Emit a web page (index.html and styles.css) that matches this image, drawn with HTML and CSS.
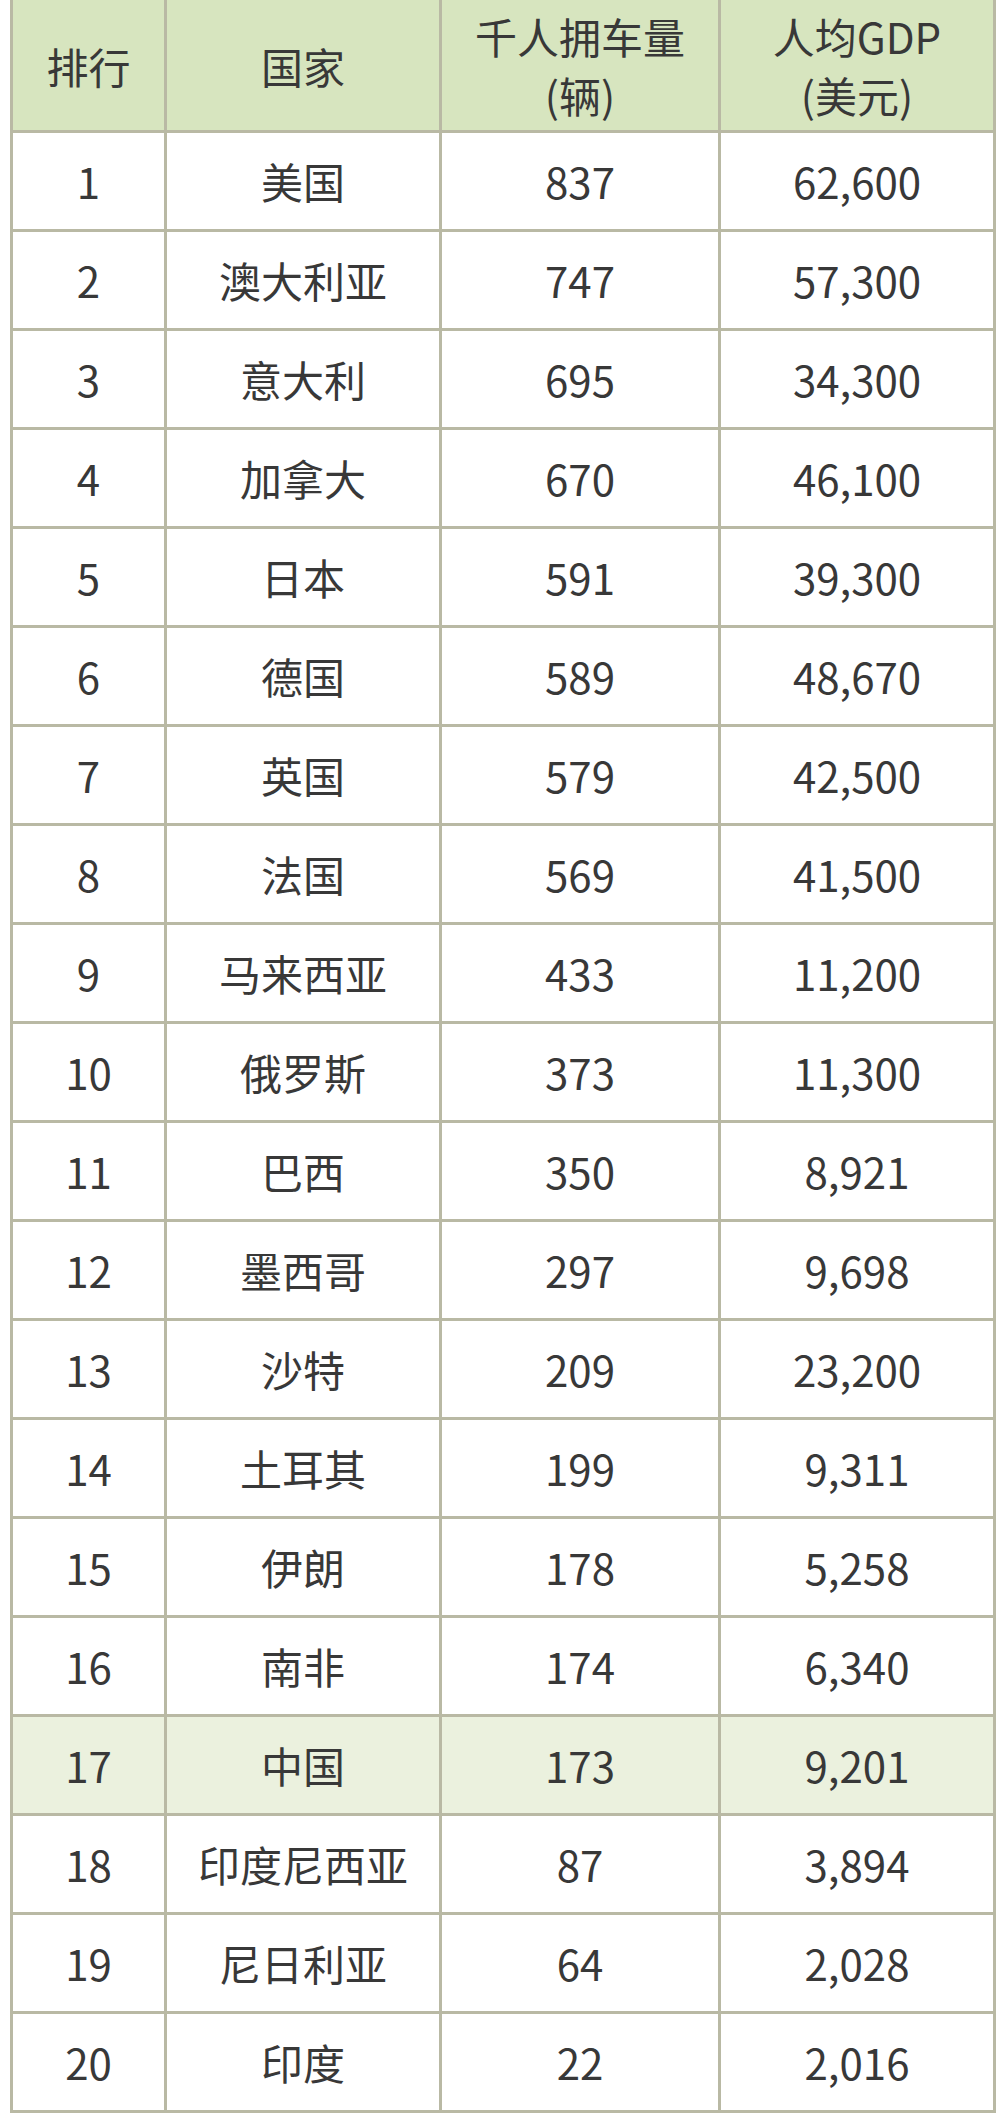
FILE: index.html
```html
<!DOCTYPE html>
<html lang="zh-CN">
<head>
<meta charset="utf-8">
<title>千人拥车量排行</title>
<link rel="stylesheet" href="styles.css">
</head>
<body>
<table class="rank-table">
  <colgroup>
    <col class="c-rank">
    <col class="c-country">
    <col class="c-cars">
    <col class="c-gdp">
  </colgroup>
  <thead>
    <tr class="head-row">
      <th>排行</th>
      <th>国家</th>
      <th>千人拥车量<br>(辆)</th>
      <th>人均GDP<br>(美元)</th>
    </tr>
  </thead>
  <tbody>
    <tr><td>1</td><td>美国</td><td>837</td><td>62,600</td></tr>
    <tr><td>2</td><td>澳大利亚</td><td>747</td><td>57,300</td></tr>
    <tr><td>3</td><td>意大利</td><td>695</td><td>34,300</td></tr>
    <tr><td>4</td><td>加拿大</td><td>670</td><td>46,100</td></tr>
    <tr><td>5</td><td>日本</td><td>591</td><td>39,300</td></tr>
    <tr><td>6</td><td>德国</td><td>589</td><td>48,670</td></tr>
    <tr><td>7</td><td>英国</td><td>579</td><td>42,500</td></tr>
    <tr><td>8</td><td>法国</td><td>569</td><td>41,500</td></tr>
    <tr><td>9</td><td>马来西亚</td><td>433</td><td>11,200</td></tr>
    <tr><td>10</td><td>俄罗斯</td><td>373</td><td>11,300</td></tr>
    <tr><td>11</td><td>巴西</td><td>350</td><td>8,921</td></tr>
    <tr><td>12</td><td>墨西哥</td><td>297</td><td>9,698</td></tr>
    <tr><td>13</td><td>沙特</td><td>209</td><td>23,200</td></tr>
    <tr><td>14</td><td>土耳其</td><td>199</td><td>9,311</td></tr>
    <tr><td>15</td><td>伊朗</td><td>178</td><td>5,258</td></tr>
    <tr><td>16</td><td>南非</td><td>174</td><td>6,340</td></tr>
    <tr class="hl"><td>17</td><td>中国</td><td>173</td><td>9,201</td></tr>
    <tr><td>18</td><td>印度尼西亚</td><td>87</td><td>3,894</td></tr>
    <tr><td>19</td><td>尼日利亚</td><td>64</td><td>2,028</td></tr>
    <tr><td>20</td><td>印度</td><td>22</td><td>2,016</td></tr>
  </tbody>
</table>
</body>
</html>
```

FILE: styles.css
```css
html, body {
  margin: 0;
  padding: 0;
  background: #ffffff;
}

body {
  font-family: "Noto Sans CJK SC", "Noto Sans", sans-serif;
  color: #383838;
}

.rank-table {
  margin-left: 10px;
  width: 986px;
  table-layout: fixed;
  border-collapse: collapse;
  border: 3px solid #b3b39c;
  border-top: none;
  font-size: 42px;
}

.c-rank { width: 154px; }
.c-country { width: 275px; }
.c-cars { width: 279px; }
.c-gdp { width: 275px; }

.rank-table th,
.rank-table td {
  border: 3px solid #b9b9a4;
  text-align: center;
  vertical-align: middle;
  padding: 0;
  font-weight: normal;
}

.rank-table th {
  border-top: none;
  background: #d7e5bf;
  height: 130px;
  line-height: 59px;
}

.rank-table td {
  height: 96px;
  line-height: 48px;
}

.rank-table tr.hl td {
  background: #ebf1de;
}
```
